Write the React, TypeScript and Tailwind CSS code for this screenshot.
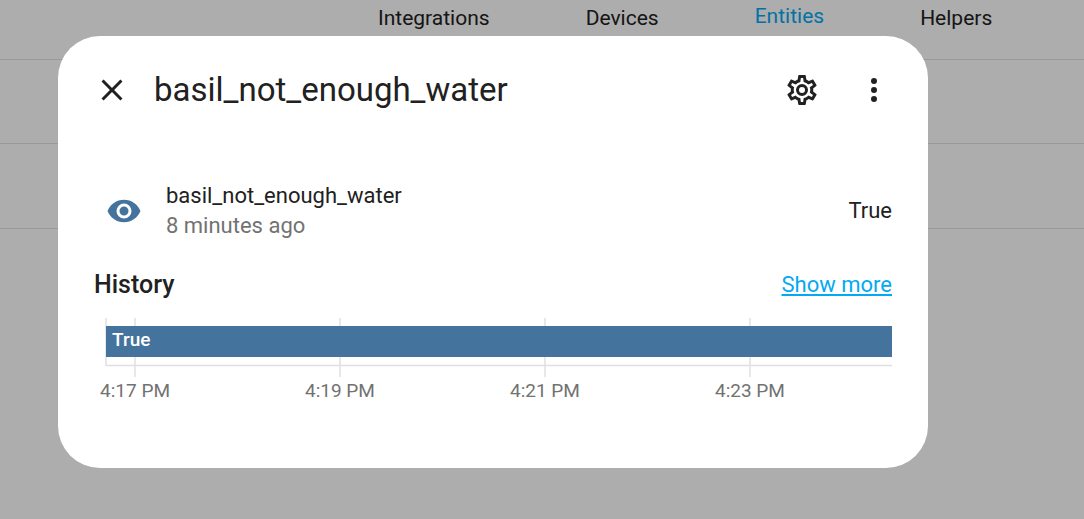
const ICONS = {
  close:
    "M19,6.41L17.59,5L12,10.59L6.41,5L5,6.41L10.59,12L5,17.59L6.41,19L12,13.41L17.59,19L19,17.59L13.41,12L19,6.41Z",
  cog: "M12,8A4,4 0 0,1 16,12A4,4 0 0,1 12,16A4,4 0 0,1 8,12A4,4 0 0,1 12,8M12,10A2,2 0 0,0 10,12A2,2 0 0,0 12,14A2,2 0 0,0 14,12A2,2 0 0,0 12,10M10,22C9.75,22 9.54,21.82 9.5,21.58L9.13,18.93C8.5,18.68 7.96,18.34 7.44,17.94L4.95,18.95C4.73,19.03 4.46,18.95 4.34,18.73L2.34,15.27C2.21,15.05 2.27,14.78 2.46,14.63L4.57,12.97L4.5,12L4.57,11L2.46,9.37C2.27,9.22 2.21,8.95 2.34,8.73L4.34,5.27C4.46,5.05 4.73,4.96 4.95,5.05L7.44,6.05C7.96,5.66 8.5,5.32 9.13,5.07L9.5,2.42C9.54,2.18 9.75,2 10,2H14C14.25,2 14.46,2.18 14.5,2.42L14.87,5.07C15.5,5.32 16.04,5.66 16.56,6.05L19.05,5.05C19.27,4.96 19.54,5.05 19.66,5.27L21.66,8.73C21.79,8.95 21.73,9.22 21.54,9.37L19.43,11L19.5,12L19.43,13L21.54,14.63C21.73,14.78 21.79,15.05 21.66,15.27L19.66,18.73C19.54,18.95 19.27,19.04 19.05,18.95L16.56,17.95C16.04,18.34 15.5,18.68 14.87,18.93L14.5,21.58C14.46,21.82 14.25,22 14,22H10M11.25,4L10.88,6.61C9.68,6.86 8.62,7.5 7.85,8.39L5.44,7.35L4.69,8.65L6.8,10.2C6.4,11.37 6.4,12.64 6.8,13.8L4.68,15.36L5.43,16.66L7.86,15.62C8.63,16.5 9.68,17.14 10.87,17.38L11.24,20H12.76L13.13,17.39C14.32,17.14 15.37,16.5 16.14,15.62L18.57,16.66L19.32,15.36L17.2,13.81C17.6,12.64 17.6,11.37 17.2,10.2L19.31,8.65L18.56,7.35L16.15,8.39C15.38,7.5 14.32,6.86 13.12,6.62L12.75,4H11.25Z",
  dots: "M12,16A2,2 0 0,1 14,18A2,2 0 0,1 12,20A2,2 0 0,1 10,18A2,2 0 0,1 12,16M12,10A2,2 0 0,1 14,12A2,2 0 0,1 12,14A2,2 0 0,1 10,12A2,2 0 0,1 12,10M12,4A2,2 0 0,1 14,6A2,2 0 0,1 12,8A2,2 0 0,1 10,6A2,2 0 0,1 12,4Z",
  eye: "M12,9A3,3 0 0,0 9,12A3,3 0 0,0 12,15A3,3 0 0,0 15,12A3,3 0 0,0 12,9M12,17A5,5 0 0,1 7,12A5,5 0 0,1 12,7A5,5 0 0,1 17,12A5,5 0 0,1 12,17M12,4.5C7,4.5 2.73,7.61 1,12C2.73,16.39 7,19.5 12,19.5C17,19.5 21.27,16.39 23,12C21.27,7.61 17,4.5 12,4.5Z",
};

function Icon({ name, className = "" }: { name: keyof typeof ICONS; className?: string }) {
  return (
    <svg viewBox="0 0 24 24" aria-hidden="true" className={`size-9 shrink-0 fill-current ${className}`}>
      <path d={ICONS[name]} />
    </svg>
  );
}

function IconButton({ name, label }: { name: keyof typeof ICONS; label: string }) {
  return (
    <button type="button" aria-label={label} className="flex size-[72px] items-center justify-center">
      <Icon name={name} />
    </button>
  );
}

const TABS = ["Integrations", "Devices", "Entities", "Helpers"];
const ACTIVE_TAB = "Entities";

const TICKS = [
  { x: "3.69%", label: "4:17 PM" },
  { x: "29.77%", label: "4:19 PM" },
  { x: "55.85%", label: "4:21 PM" },
  { x: "81.93%", label: "4:23 PM" },
];

function HistoryChart() {
  return (
    <svg role="img" aria-label="State history" className="block h-[84px] w-full overflow-visible">
      <g stroke="#e0e0e0" strokeWidth="1.5">
        <line x1="0" x2="0" y1="0" y2="48" />
        <line x1="0" x2="100%" y1="47.5" y2="47.5" />
        {TICKS.map((t) => (
          <line key={t.label} x1={t.x} x2={t.x} y1="0" y2="59" />
        ))}
      </g>
      <rect x="0" y="8" width="100%" height="31" fill="#44739e" />
      <text x="6" y="28" className="fill-white text-[19px] font-medium">
        True
      </text>
      {TICKS.map((t) => (
        <text key={t.label} x={t.x} y="79" textAnchor="middle" className="fill-[#727272] text-[19px]">
          {t.label}
        </text>
      ))}
    </svg>
  );
}

export default function App() {
  return (
    <div className="min-h-screen bg-white font-[Roboto,sans-serif] text-[#212121]">
      <nav className="flex h-[60px] items-stretch gap-24 border-b border-[#e0e0e0] pl-[378px] text-[21px] leading-[31px]">
        {TABS.map((tab) => (
          <a
            key={tab}
            href="#"
            className={
              tab === ACTIVE_TAB
                ? "flex items-center border-b-4 border-[#03a9f4] pb-[22px] text-[#03a9f4]"
                : "flex items-center pb-[22px]"
            }
          >
            {tab}
          </a>
        ))}
      </nav>
      <div className="h-21 border-b border-[#e0e0e0]" />
      <div className="h-[85px] border-b border-[#e0e0e0]" />

      <div className="fixed inset-0 bg-black/32 pt-9 pr-[156px] pl-[58px]">
        <div role="dialog" aria-labelledby="dialog-title" className="rounded-[42px] bg-white pb-[66px]">
          <header className="flex items-center pt-[18px] pr-[18px] pl-[18px]">
            <IconButton name="close" label="Close" />
            <h1 id="dialog-title" className="flex-1 pl-[6px] text-[33px]">
              basil_not_enough_water
            </h1>
            <IconButton name="cog" label="Settings" />
            <IconButton name="dots" label="More options" />
          </header>

          <div className="px-9 pt-[55px]">
            <div className="flex items-center pl-3 text-[22px] leading-[30px]">
              <Icon name="eye" className="text-[#44739e]" />
              <div className="flex-1 pl-6">
                <p>basil_not_enough_water</p>
                <p className="text-[#727272]">8 minutes ago</p>
              </div>
              <p>True</p>
            </div>

            <div className="flex items-center justify-between pt-[26px] leading-9">
              <h2 className="text-[25px] font-medium">History</h2>
              <a href="#" className="text-[22px] text-[#03a9f4] underline">
                Show more
              </a>
            </div>

            <div className="pt-[15px] pl-3">
              <HistoryChart />
            </div>
          </div>
        </div>
      </div>
    </div>
  );
}
